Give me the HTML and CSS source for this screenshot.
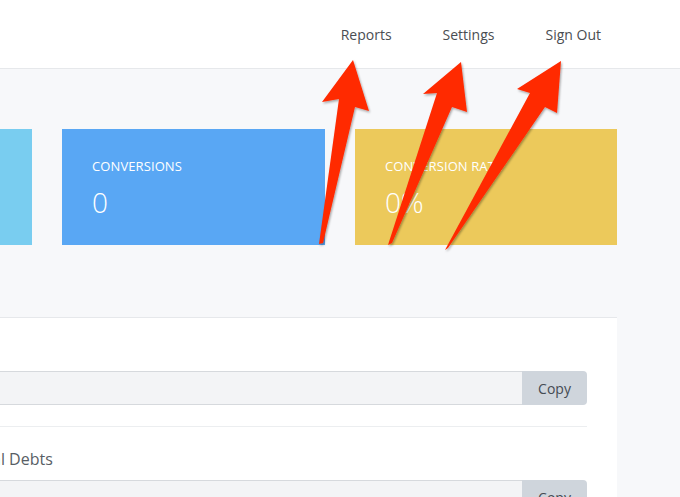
FILE: index.html
```html
<!DOCTYPE html>
<html lang="en">
<head>
<meta charset="utf-8">
<title>Dashboard</title>
<link rel="stylesheet" href="styles.css">
</head>
<body>
<header class="topbar">
  <nav class="nav">
    <a class="nav-link" href="#">Reports</a>
    <a class="nav-link" href="#">Settings</a>
    <a class="nav-link" href="#">Sign Out</a>
  </nav>
</header>
<main class="content">
  <div class="stats">
    <div class="card card-sky">
      <div class="card-label">SIGNUPS</div>
      <div class="card-value">0</div>
    </div>
    <div class="card card-blue">
      <div class="card-label">CONVERSIONS</div>
      <div class="card-value">0</div>
    </div>
    <div class="card card-gold">
      <div class="card-label">CONVERSION RATE</div>
      <div class="card-value">0%</div>
    </div>
  </div>
  <section class="panel">
    <div class="field">
      <div class="field-label">Your Referral Link</div>
      <div class="input-group">
        <input class="input" type="text" readonly value="">
        <button class="copy-btn" type="button">Copy</button>
      </div>
    </div>
    <div class="field">
      <div class="field-label">Share Link for Your Referral Debts</div>
      <div class="input-group">
        <input class="input" type="text" readonly value="">
        <button class="copy-btn" type="button">Copy</button>
      </div>
    </div>
  </section>
</main>
<svg class="arrows" width="680" height="497" viewBox="0 0 680 497" aria-hidden="true">
  <defs>
    <filter id="shadow" x="-20%" y="-20%" width="140%" height="140%">
      <feDropShadow dx="1" dy="1.5" stdDeviation="1.2" flood-color="#000" flood-opacity="0.35"/>
    </filter>
  </defs>
  <g fill="#ff2a00" filter="url(#shadow)">
    <polygon points="319,244 339,99 322,102 353,60 369,111 355,107 323,243"/>
    <polygon points="388,245 437,93 423,94 461,62 467,112 452,107 392,243"/>
    <polygon points="445,250 530,93 517,89 561,61 557,113 545,107 448,248"/>
  </g>
</svg>
</body>
</html>
```

FILE: styles.css
```css
* {
  box-sizing: border-box;
}

html, body {
  margin: 0;
  padding: 0;
}

body {
  width: 680px;
  height: 497px;
  overflow: hidden;
  background: #f7f8fa;
  font-family: "Open Sans", "Liberation Sans", sans-serif;
  color: #4a4f55;
  position: relative;
}

.topbar {
  height: 69px;
  background: #ffffff;
  border-bottom: 1px solid #e6e8eb;
  display: flex;
  justify-content: flex-end;
  align-items: center;
}

.nav {
  display: flex;
  gap: 51px;
  padding-right: 79px;
  padding-top: 1px;
}

.nav-link {
  font-size: 14px;
  line-height: 20px;
  color: #4a4d52;
  text-decoration: none;
}

.content {
  margin-left: -231px;
  width: 848px;
  padding-top: 60px;
}

.stats {
  display: grid;
  grid-template-columns: 263px 263px 262px;
  gap: 30px;
}

.card {
  height: 116px;
  padding: 28px 30px 0;
  color: #ffffff;
}

.card-sky {
  background: #79cdf0;
}

.card-blue {
  background: #59a7f4;
}

.card-gold {
  background: #ecc95b;
}

.card-label {
  font-size: 13px;
  line-height: 18px;
  letter-spacing: 0.1px;
}

.card-value {
  margin-top: 9px;
  font-size: 28px;
  line-height: 36px;
  font-weight: 300;
}

.panel {
  margin-top: 72px;
  background: #ffffff;
  border-top: 1px solid #e6e8eb;
  padding: 0 30px;
}

.field {
  padding: 20px 0 21px;
  border-bottom: 1px solid #eceef0;
}

.field-label {
  font-size: 16px;
  line-height: 24px;
  color: #585e65;
  margin-bottom: 9px;
  white-space: nowrap;
}

.input-group {
  display: flex;
  height: 34px;
}

.input {
  flex: 1;
  min-width: 0;
  height: 34px;
  margin: 0;
  border: 1px solid #d6d9dd;
  border-right: none;
  border-radius: 4px 0 0 4px;
  background: #f3f4f6;
  font: inherit;
  font-size: 14px;
  padding: 0 12px;
  outline: none;
}

.copy-btn {
  width: 65px;
  height: 34px;
  margin: 0;
  border: none;
  border-radius: 0 4px 4px 0;
  background: #cfd5dc;
  color: #454b53;
  font-family: "Open Sans", "Liberation Sans", sans-serif;
  font-size: 14px;
  padding: 0;
  cursor: pointer;
}

.arrows {
  position: absolute;
  left: 0;
  top: 0;
  pointer-events: none;
}
```
